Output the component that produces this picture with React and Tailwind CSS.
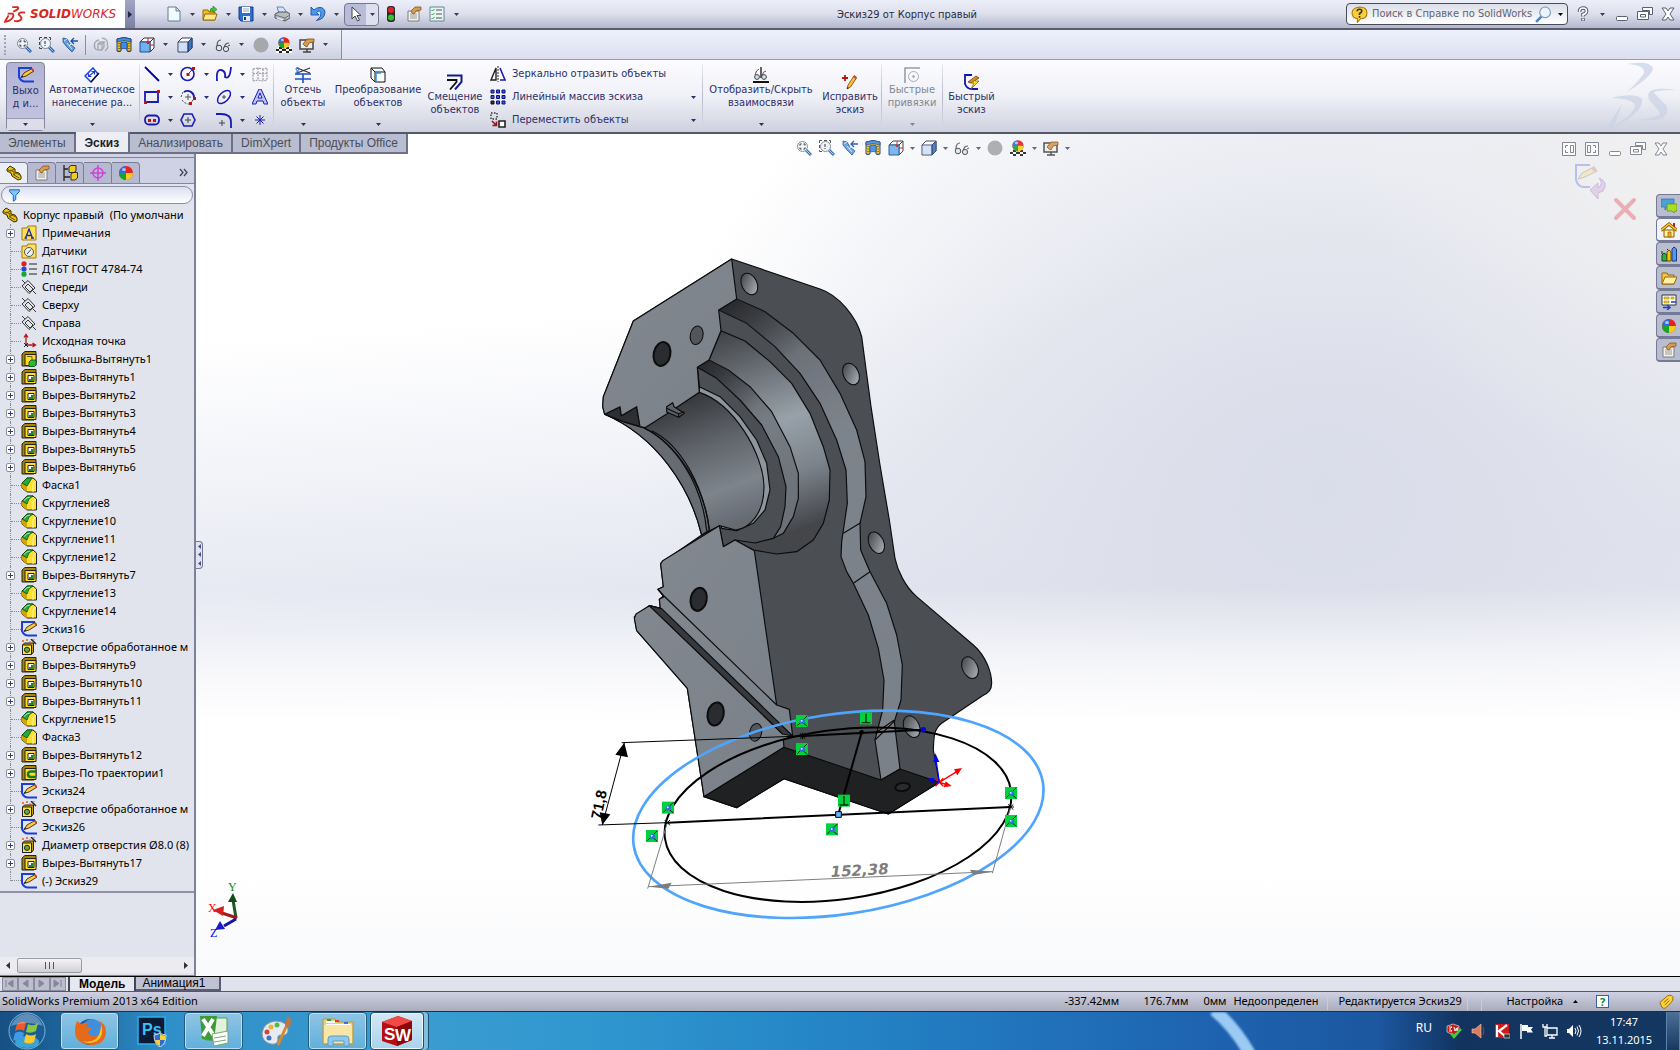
import { clsx } from "clsx";

// ── ICONS ──
// Every drawing lives on a 16x16 grid; <Icon> scales it to the size asked for.
const part = (
  <>
    <path d="M1 4l3-3 5 3v3l4 1 2 3v3l-3 1-6-4-1-3-4-2z" fill="#e8c31c" stroke="#3a2c00" />
    <path d="M4 5l4 2v3l5 3M1 4l3 2 5-2M7 10l3-2 4 2" fill="none" stroke="#6e5200" />
  </>
);
const magnifier = (
  <>
    <path d="M10 10l5 5" stroke="#2b62ad" strokeWidth="3" />
    <path d="M10 10l4.500 4.500" stroke="#9cc8f2" />
    <circle cx="6.500" cy="6.500" r="5" fill="#eef4fb" stroke="#7d8490" />
  </>
);
const boss = (
  <>
    <path d="M1 3l3-2.500h11v11L13 15H1z" fill="#a98500" stroke="#222" />
    <path d="M4 3.500h11v11H4z" fill="#fddc2a" stroke="#222" />
  </>
);
const rounded = (
  <>
    <path d="M1 6l5-5h6l3.500 3v11H6L1 11z" fill="#ffdf2e" stroke="#222" />
    <path d="M1 11l5 4V9L1 6z" fill="#d5a500" />
    <path d="M15 4l-3 3v8" fill="none" stroke="#fff6a8" />
  </>
);
const sketch = (
  <>
    <path d="M14 1H1v9q2 4.500 6 4.500h9" fill="none" stroke="#1b3ed8" strokeWidth="2" />
    <path d="M3 10.500l3-4.500 8-4.500 2 2.500-8 5z" fill="#fbc93b" stroke="#3b2a10" strokeWidth=".9" />
    <path d="M3 10.500l1.200-2 1.300 1.300z" fill="#222" />
    <path d="M13 2l1.500-.8 1.500 2.300-1.400.9z" fill="#d23c3c" />
  </>
);
const page = (
  <>
    <path d="M2 5h11v10H2z" fill="#f1f1ee" stroke="#7d7d7d" />
    <path d="M4 8h7M4 10h7M4 12h7" stroke="#9a9a9a" />
    <path d="M5 5l4-4h6v3l-5 1-2 3-2-1z" fill="#d79a4e" stroke="#7a4a15" strokeWidth=".7" />
  </>
);
const ball = (
  <>
    <circle cx="8" cy="8" r="7" fill="#e32222" />
    <path d="M8 8V1a7 7 0 0 0-7 7z" fill="#2d6fe0" />
    <path d="M8 8v7A7 7 0 0 1 1 8z" fill="#18a32c" />
    <path d="M8 8v7a7 7 0 0 0 7-7z" fill="#f2cf1d" />
    <ellipse cx="6" cy="4.500" rx="2" ry="1.500" fill="#fff" opacity=".6" />
  </>
);
const plane = (
  <path d="M1 7l6-5.500 7 7.500-6 5.500zM4 8l3-3 5 5-3 3zM1 1l3 3M12 12l3 3" fill="none" stroke="#222" strokeWidth=".9" />
);
const hole = (
  <>
    <path d="M1.500 6l2-2h9v9l-2 2.500h-9z" fill="#c99f00" stroke="#222" />
    <path d="M1.500 6h9v9.500h-9z" fill="#fde548" stroke="#222" />
    <circle cx="6" cy="10.800" r="2.600" fill="#64a844" stroke="#222" />
    <path d="M10 0l5 5" stroke="#222" strokeWidth="1.500" />
    <path d="M2 1v2M1 2h2M6 0v2M5 1h2M9 2v2M12 0h2" stroke="#e05a10" />
  </>
);
const pencil = (
  <>
    <path d="M5 15l1-4 6-9 2.500 2-6 9z" fill="#f9c22e" stroke="#6b4210" strokeWidth=".8" />
    <path d="M11 3l1.200-2 2.800 2-1.400 2z" fill="#d24545" />
    <path d="M5 15l.5-2 1.500 1z" fill="#222" />
  </>
);

const ICONS = {
  part, sketch, page, ball, plane, hole,
  newDoc: <path d="M2 1h8l4 4v10H2zM10 1v4h4" fill="#f3fafd" stroke="#5d7f92" />,
  open: (
    <>
      <path d="M1 4h5l1 2h6v8H1z" fill="#f7b92c" stroke="#9a6a00" />
      <path d="M3 8h12l-2 6H1z" fill="#ffe98c" stroke="#9a6a00" />
      <path d="M8 5q0-3 3-3V0l4 3.500-4 3V4.500q-2 0-2 1z" fill="#3fc832" stroke="#197a10" strokeWidth=".6" />
    </>
  ),
  save: (
    <>
      <path d="M1 1h14v14H3l-2-2z" fill="#2f6fd0" stroke="#173a80" />
      <path d="M4 1h8v6H4z" fill="#fff" />
      <path d="M5 3h6M5 5h6" stroke="#9ab" />
      <path d="M5 10h7v5H5z" fill="#dfe8f5" />
      <path d="M6 11h2v3H6z" fill="#173a80" />
    </>
  ),
  print: (
    <>
      <path d="M3 1h6l4 6H5z" fill="#cfe4ff" stroke="#6b84a8" />
      <path d="M1 8l4-2h8l3 2v4l-5 3L1 12z" fill="#b9bcc2" stroke="#555" />
      <path d="M1 9l10 3 5-3M11 12v3" fill="none" stroke="#70737a" />
      <path d="M3 12l6 2" stroke="#e8e9ec" strokeWidth="1.500" />
    </>
  ),
  undo: (
    <path d="M1 1v8h8L6.500 6.500Q10 3.500 11 7q.5 4-4.500 7.500Q15 13 15 6 14 1 9 1.500 6 2 4 4z" fill="#4b9be8" stroke="#1650a8" strokeWidth=".9" />
  ),
  cursor: <path d="M4 1v12l3-3 2.500 5 2-1L9 9.500h4z" fill="#fff" stroke="#444" />,
  light: (
    <>
      <rect x="4" y="0" width="8" height="16" rx="3" fill="#2b2b2b" />
      <circle cx="8" cy="4" r="3" fill="#e8202c" />
      <circle cx="8" cy="11.500" r="3" fill="#33c32e" />
    </>
  ),
  list: (
    <>
      <path d="M1 1h14v14H1z" fill="#e9f4f4" stroke="#5c8a90" />
      <path d="M2.500 4l1 1 2-2M2.500 8l1 1 2-2M2.500 12l1 1 2-2" fill="none" stroke="#2a9a3a" />
      <path d="M7 4h6M7 8h6M7 12h6" stroke="#555" />
    </>
  ),
  zoomFit: (
    <>
      {magnifier}
      <path d="M4 5.500V4h1.500M9 5.500V4H7.500M4 7.500V9h1.500M9 7.500V9H7.500" fill="none" stroke="#222" />
    </>
  ),
  zoomArea: (
    <>
      {magnifier}
      <path d="M.5 3V.5H3M5 .5h3M10 .5h1.500V3M.5 5v3M.5 10v1.500H3" fill="none" stroke="#444" />
      <path d="M6 4v3M6 8v1" stroke="#222" />
    </>
  ),
  previous: (
    <>
      <path d="M1 1l4 1 3 5 5 4-3 4-5-5-4-5z" fill="#5c9ede" stroke="#1f4c8a" strokeWidth=".8" />
      <path d="M5 6l5 6M2 4l3-2M7 9l2-2" stroke="#cfe6fb" />
      <path d="M16 4H9.500M12 1L9 4l3 3" fill="none" stroke="#1c50a8" strokeWidth="1.300" />
    </>
  ),
  rotate: (
    <path d="M2 10q-2-6 4-7M4 13q-4-2-2-7M9 1q7 1 5 8M12 14q3-2 3-5M5 7h4v6H5zM9 7l2-2H7L5 7M9 13l2-3V5" fill="none" stroke="#a6a8ae" strokeWidth="1.300" />
  ),
  section: (
    <>
      <path d="M1 2q7-3 14 0v12q-2 1.500-4 0V6Q8 5 5 6v8q-2 1.500-4 0z" fill="#f5c21a" stroke="#183c7a" />
      <path d="M1 2q7-3 14 0v3q-7-3-14 0zM5 5.500Q8 4.500 11 5.500V12Q8 11 5 12z" fill="#3e8fe8" stroke="#183c7a" strokeWidth=".7" />
      <path d="M3 6v8M13 6v8" stroke="#222" strokeDasharray="1 1.500" />
    </>
  ),
  views: (
    <>
      <path d="M5 1h10v10l-4 4V5H1l4-4zM11 5l4-4" fill="#fff" stroke="#333" />
      <path d="M1 5h10v10H1z" fill="#6fb0ef" stroke="#1d4f93" />
      <path d="M9 1v6M7.500 5L9 7l1.500-2M15 8h-4" fill="none" stroke="#c81818" />
    </>
  ),
  cube: (
    <>
      <path d="M1 5l4-4h10v10l-4 4H1z" fill="#fff" stroke="#2d3f66" />
      <path d="M11 5l4-4v10l-4 4z" fill="#3a76c8" stroke="#2d3f66" />
      <path d="M2 6h8v8H2z" fill="#cfe0f6" />
      <path d="M1 5h10v10" fill="none" stroke="#2d3f66" />
    </>
  ),
  glasses: (
    <>
      <path d="M2 9q0-6 4-6M9 11q1-5 5-5" fill="none" stroke="#555" strokeWidth="1.200" />
      <circle cx="4" cy="11" r="2.800" fill="#d8e8f2" stroke="#444" />
      <circle cx="11" cy="12" r="2.600" fill="#d8e8f2" stroke="#444" />
      <path d="M13 9l2-1" stroke="#444" />
    </>
  ),
  sphere: <circle cx="8" cy="8" r="7.500" fill="#a6a8ac" />,
  appearance: (
    <>
      <path d="M0 12l3-2h10l3 2v4H0z" fill="#fff" />
      <path d="M0 12h3v2H0zM3 14h3v2H3zM6 12h4v2H6zM10 14h3v2h-3zM13 12h3v2h-3zM3 10h3v2H3zM10 10h3v2h-3z" fill="#222" />
      <g transform="translate(1.600 -.6) scale(.8)">{ball}</g>
    </>
  ),
  scene: (
    <>
      <path d="M1 3h13v9H1z" fill="#eceff2" stroke="#444" strokeWidth="1.500" />
      <path d="M4 15h8M8 12v3" stroke="#444" strokeWidth="1.500" />
      <path d="M4 7l4-5h7v3l-5 1-2 4-2-1z" fill="#d79a4e" stroke="#6e420f" strokeWidth=".7" />
    </>
  ),
  dimension: (
    <>
      <path d="M1 9l8-8 5 6-7 8z" fill="#fff" stroke="#1c3fd6" strokeWidth="1.500" />
      <path d="M7 15l8-9" stroke="#111" strokeWidth="1.200" />
      <path d="M5 9l5-4M4.500 6.500v3h3M7.500 4.500h3v3" fill="none" stroke="#1c3fd6" strokeWidth="1.200" />
    </>
  ),
  line: <path d="M1 1l14 14" stroke="#00009c" strokeWidth="1.800" />,
  rect: (
    <>
      <path d="M1 3h13v10H1z" fill="none" stroke="#1a1ab4" strokeWidth="1.800" />
      <path d="M13 1h3v3h-3zM0 12h3v3H0z" fill="#c01010" />
    </>
  ),
  slot: (
    <>
      <rect x="1" y="3.500" width="14" height="9" rx="4" fill="none" stroke="#1a1ab4" strokeWidth="1.800" />
      <path d="M4 7h3v3H4zM9 7h3v3H9z" fill="#c01010" />
    </>
  ),
  circle: (
    <>
      <circle cx="7.500" cy="8" r="6.500" fill="none" stroke="#1a1ab4" strokeWidth="1.600" />
      <path d="M6.500 7h3v3h-3zM12 1h3v3h-3z" fill="#c01010" />
      <path d="M8 8l5-5" stroke="#c01010" />
    </>
  ),
  arc: (
    <>
      <path d="M4 3A6.500 6.500 0 0 1 14 9" fill="none" stroke="#1a1ab4" strokeWidth="1.800" />
      <path d="M1 8l2-5M2 11q3 4 7 4M13 11l-2 3" fill="none" stroke="#444" strokeDasharray="2 1.500" />
      <path d="M8 5v6M5 8h6" stroke="#555" />
      <path d="M13 8h3v3h-3zM9 13h3v3H9z" fill="#c01010" />
    </>
  ),
  polygon: (
    <>
      <path d="M4 2h8l3 6-3 6H4L1 8z" fill="none" stroke="#1a1ab4" strokeWidth="1.600" />
      <path d="M8 5v6M5 8h6" stroke="#444" />
    </>
  ),
  spline: <path d="M1 15Q0 3 5 4t4 7q5 3 6-10" fill="none" stroke="#1a1ab4" strokeWidth="1.800" />,
  ellipse: (
    <>
      <ellipse cx="8" cy="8" rx="8" ry="4.500" transform="rotate(-45 8 8)" fill="none" stroke="#1a1ab4" strokeWidth="1.500" />
      <path d="M6 8h4M8 6v4" stroke="#444" />
    </>
  ),
  fillet: (
    <>
      <path d="M0 2h5q10 0 10 8v6" fill="none" stroke="#1a1ab4" strokeWidth="1.800" />
      <path d="M6 8v6M3 11h6" stroke="#444" />
    </>
  ),
  gridSketch: <path d="M1 3l5-1 5 1 4-1v12l-4 1-5-1-5 1zM1 8l5-1 5 1 4-1M6 2v12M11 3v12" fill="none" stroke="#8c8c94" strokeDasharray="2 1" />,
  letter: <path d="M0 15L7 0h2l7 15h-4l-1-3H5l-1 3zM6 9l2-5 2 5z" fill="#b9c4f2" stroke="#1a1ab4" fillRule="evenodd" />,
  star: <path d="M8 3v10M3 8h10M4.500 4.500l7 7M11.500 4.500l-7 7" stroke="#1a1ab4" />,
  trim: (
    <>
      <path d="M0 7h16M8 7v9M0 12h16" stroke="#1c50c8" strokeWidth="1.600" />
      <path d="M2 1l13 5M2 6l13-5" stroke="#333" strokeWidth="1.200" />
      <circle cx="2.500" cy="2" r="1.500" fill="none" stroke="#2864c4" />
      <circle cx="2.500" cy="6" r="1.500" fill="none" stroke="#2864c4" />
    </>
  ),
  convert: (
    <>
      <path d="M1 1h11l3 4v10H5L1 11zM1 1l4 4h10M5 5v10" fill="#fff" stroke="#111" />
      <path d="M6 15V6h5" fill="none" stroke="#2a8af0" strokeWidth="1.500" />
    </>
  ),
  offset: (
    <>
      <path d="M0 1.500h14.500V8L8 15.500" fill="none" stroke="#111a8c" strokeWidth="2" />
      <path d="M0 6h9.500v2L3 15.500" fill="none" stroke="#111" strokeWidth="1.800" />
    </>
  ),
  mirror: (
    <>
      <path d="M6 2L1 14h5z" fill="#fff" stroke="#222" strokeWidth="1.400" />
      <path d="M10 2l5 12h-5" fill="#fff" stroke="#1a1ab4" strokeWidth="1.600" />
      <path d="M8 0v16" stroke="#222" strokeDasharray="2 1" />
    </>
  ),
  pattern: (
    <>
      <path d="M1 1h3v3H1zM6.500 1h3v3h-3zM12 1h3v3h-3zM1 6.500h3v3H1zM6.500 6.500h3v3h-3zM12 6.500h3v3h-3zM6.500 12h3v3h-3zM12 12h3v3h-3z" fill="#3f55e0" stroke="#10107a" />
      <path d="M1 12h3v3H1z" fill="#333" stroke="#111" />
    </>
  ),
  move: (
    <>
      <path d="M1 1h6v6H1z" fill="none" stroke="#333" strokeWidth="1.400" strokeDasharray="1.500 1.500" />
      <path d="M9 9h6v6H9z" fill="#fff" stroke="#222" strokeWidth="1.600" />
      <path d="M2 9l4 4M6.500 9.500v4h-4" fill="none" stroke="#a01010" strokeWidth="1.600" />
    </>
  ),
  relations: (
    <>
      <path d="M0 15h16" stroke="#111" strokeWidth="2" />
      <path d="M8 0v11" stroke="#111" strokeWidth="1.300" />
      <path d="M2 8q1-5 4-6M9 9q1-5 4-5" fill="none" stroke="#555" />
      <circle cx="4" cy="10" r="2.400" fill="#cfe2f0" stroke="#444" />
      <circle cx="11" cy="10" r="2.400" fill="#cfe2f0" stroke="#444" />
    </>
  ),
  repair: (
    <>
      {pencil}
      <path d="M3 1v6M0 4h6" stroke="#c01414" strokeWidth="1.800" />
    </>
  ),
  snaps: (
    <>
      <path d="M1 16V1h15" fill="none" stroke="#9b9ba3" strokeWidth="1.600" />
      <circle cx="9.500" cy="9.500" r="5" fill="none" stroke="#aaaab2" />
      <circle cx="9.500" cy="9.500" r="1.200" fill="#9b9ba3" />
    </>
  ),
  rapid: (
    <>
      <path d="M8 1H1v9q2 5 7 5h6" fill="none" stroke="#1515a8" strokeWidth="1.800" />
      <path d="M4 8l8-6 3 2-8 5z" fill="#e08a2c" stroke="#6b4210" strokeWidth=".8" />
      <path d="M14 4L7 9h3l-3 6 8-8h-4z" fill="#ffe21f" stroke="#8a6a00" strokeWidth=".8" />
    </>
  ),
  config: (
    <>
      <path d="M2 0v16M2 4h4M2 12h6" stroke="#222" strokeWidth="1.300" />
      <path d="M7 2l2-1.500h5V6l-2 1.500H7zM9 9l2-1.500h4.500V13L13 15H9z" fill="#f2cc1e" stroke="#222" strokeWidth=".9" />
    </>
  ),
  target: (
    <>
      <circle cx="8" cy="8" r="5" fill="none" stroke="#cc45d8" strokeWidth="1.500" />
      <path d="M8 0v16M0 8h16" stroke="#cc45d8" strokeWidth="1.500" />
    </>
  ),
  notes: (
    <>
      <path d="M1 3h5l1-2h8v14H1z" fill="#ffe05a" stroke="#a87a00" />
      <path d="M4.500 13L8 4l3.500 9M5.500 10.500h5M3.500 13h2.500M10 13h3" fill="none" stroke="#182c9c" strokeWidth="1.300" />
    </>
  ),
  sensors: (
    <>
      <path d="M1 3h5l1-2h8v14H1z" fill="#ffe05a" stroke="#a87a00" />
      <circle cx="8" cy="9" r="4.500" fill="#e8f0fa" stroke="#555" />
      <path d="M6 11l4-4.500" stroke="#444" />
    </>
  ),
  material: (
    <>
      <circle cx="3" cy="2.800" r="2.600" fill="#e02020" />
      <circle cx="3" cy="8" r="2.600" fill="#2448d8" />
      <circle cx="3" cy="13.200" r="2.600" fill="#18a830" />
      <path d="M8 3h8M8 8h8M8 13h8" stroke="#222" strokeWidth="1.200" />
    </>
  ),
  origin: (
    <>
      <path d="M5 12V2M5 12h9M3 4.500L5 1.500l2 3M11.500 10l3 2-3 2" fill="none" stroke="#b01818" strokeWidth="1.300" />
      <path d="M3 10l4 4M7 10l-4 4" stroke="#222" />
    </>
  ),
  boss: (
    <>
      {boss}
      <path d="M6 5.500h5v4l3 1" fill="none" stroke="#7a6200" />
      <path d="M8 11l2-2h5v5l-1.500 1.500H8z" fill="#2eb53e" stroke="#0b4d14" strokeWidth=".8" />
    </>
  ),
  cut: (
    <>
      {boss}
      <path d="M7 6.500h6v6H7z" fill="#fff" stroke="#222" />
      <path d="M8 10h2V8h2.500v4H8z" fill="#1c8a2c" />
    </>
  ),
  sweep: (
    <>
      {boss}
      <path d="M15 6.500H10q-3 0-3 2.700t3 2.800h5" fill="none" stroke="#157a22" strokeWidth="2.600" />
    </>
  ),
  chamfer: (
    <>
      {rounded}
      <path d="M1 6l5-5h5L6 9z" fill="#27a838" stroke="#0b4d14" strokeWidth=".8" />
    </>
  ),
  fillet3d: (
    <>
      {rounded}
      <path d="M1 6l5-5h6q-5 2-6 8z" fill="#27a838" stroke="#0b4d14" strokeWidth=".8" />
      <path d="M3 5.500Q6 2 9 2" fill="none" stroke="#a6eab0" />
    </>
  ),
  filter: <path d="M2 1h12v2L9.500 8v5l-3 2V8L2 3z" fill="#7ec4f8" stroke="#1b5fc0" strokeWidth="1.200" />,
  forum: (
    <>
      <path d="M0 1h13v8H6l-2 3V9H0z" fill="#4ba0dc" stroke="#2c6e9e" strokeWidth=".7" />
      <path d="M6 6h10v7h-2l-1 2-2-2H6z" fill="#a8dc2a" stroke="#5e8a10" strokeWidth=".7" />
    </>
  ),
  home: (
    <>
      <path d="M3 8h10v7H3z" fill="#fff2a0" stroke="#8a5a00" />
      <path d="M12 1h2v5h-2z" fill="#b82020" />
      <path d="M0 8.500L8 2l8 6.500" fill="none" stroke="#8a5a00" strokeWidth="3" />
      <path d="M0 8.500L8 2l8 6.500" fill="none" stroke="#f5c430" strokeWidth="1.500" />
      <path d="M7 10h3v5H7z" fill="#f0b020" stroke="#8a5a00" strokeWidth=".7" />
    </>
  ),
  library: (
    <>
      <path d="M1 9l2-2 3 2v6H1z" fill="#30b040" stroke="#0c4a14" />
      <path d="M1 5v3M6 3l2 2" stroke="#222" />
      <path d="M6 6l2-2 2 2v9H6z" fill="#f5c824" stroke="#6a4a00" />
      <path d="M11 3l2-2 2.500 2v12H11z" fill="#5a94e6" stroke="#173a80" />
    </>
  ),
  folder: (
    <>
      <path d="M1 3h5l1 2h6v9H1z" fill="#f9c84a" stroke="#96640a" />
      <path d="M4 7h12l-3 7H1z" fill="#fff0a0" stroke="#96640a" />
    </>
  ),
  palette: (
    <>
      <path d="M1 1h14v10H1z" fill="#fff" stroke="#333" />
      <path d="M3 3h5v2H3zM10 3h3v2h-3zM3 7h5v2H3z" fill="#f5d020" stroke="#8a7000" strokeWidth=".5" />
      <path d="M10 8h5M2 13.500h6M6 11l3 2.500L6 16" stroke="#1b3ec8" strokeWidth="1.500" fill="none" />
    </>
  ),
  helpBubble: (
    <>
      <path d="M8 1q7 0 7 5.500T9 12l-3 3.500V12Q1 11 1 6.500T8 1z" fill="#f9cf35" stroke="#a9780a" />
      <path d="M5.800 5q0-2 2.200-2t2.200 1.700Q10.200 6 8 7v1.500M8 9.500V11" fill="none" stroke="#333" strokeWidth="1.500" />
    </>
  ),
  search: (
    <>
      <path d="M6 10l-5 5" stroke="#4b84c4" strokeWidth="2.400" />
      <circle cx="9.500" cy="6" r="5" fill="#e9f4fd" stroke="#7b95b4" />
    </>
  ),
  question: (
    <>
      <path d="M4.500 6q0-4 3.500-4t3.500 3.200Q11.500 7.500 8 8.500v2M8 12v3" fill="none" stroke="#5a5f72" strokeWidth="3.600" />
      <path d="M4.500 6q0-4 3.500-4t3.500 3.200Q11.500 7.500 8 8.500v2M8 12.500v2" fill="none" stroke="#fff" strokeWidth="1.600" />
    </>
  ),
  minimize: <rect x="2.500" y="10.500" width="11" height="4" rx="1" fill="#fff" stroke="#5a5f72" />,
  restore: (
    <>
      <path d="M5.500 1.500h10v7h-3v-4h-7z" fill="#fff" stroke="#5a5f72" />
      <path d="M.5 5.500h11v8H.5zM3.500 8.500h5v2.500h-5z" fill="#fff" stroke="#5a5f72" />
    </>
  ),
  close: <path d="M2 2h4l2 3 2-3h4l-4 6 4 6h-4l-2-3-2 3H2l4-6z" fill="#fff" stroke="#5a5f72" />,
  dockLeft: <path d="M1.500 1.500h13v13h-13zM9.500 4.500h3v7h-3zM7 4.500H4.500V7M7 11.500H4.500V9" fill="#fff" stroke="#5a5f72" />,
  dockRight: <path d="M1.500 1.500h13v13h-13zM3.500 4.500h3v7h-3zM9 4.500h2.500V7M9 11.500h2.500V9" fill="#fff" stroke="#5a5f72" />,
  tag: (
    <>
      <path d="M1 9l8-7q5-2 6 2 0 3-2 5l-6 6q-2 1-4-1z" fill="#fbd23c" stroke="#9a6406" />
      <path d="M5 9l5-4M6 12l5-5" stroke="#9a6406" />
    </>
  ),
};

function Icon({ name, size = 16, className }) {
  return (
    <svg viewBox="0 0 16 16" width={size} height={size} fill="none" className={clsx("shrink-0", className)} aria-hidden="true">
      {ICONS[name]}
    </svg>
  );
}

function Caret({ className }) {
  return (
    <svg viewBox="0 0 5 3" width="5" height="3" className={clsx("shrink-0 fill-current", className)} aria-hidden="true">
      <path d="M0 0h5L2.500 3z" />
    </svg>
  );
}

// ── TITLE BAR ──
function SearchBox() {
  return (
    <div className="flex h-[22px] w-[222px] items-center rounded border border-[#4a4c58] bg-gradient-to-b from-[#dcdee9] to-white px-1">
      <Icon name="helpBubble" size={17} />
      <input
        type="text"
        aria-label="Поиск в Справке"
        placeholder="Поиск в Справке по SolidWorks"
        className="ml-1 min-w-0 flex-1 bg-transparent text-[11px] placeholder:text-[#63646e] outline-none"
      />
      <button type="button" aria-label="Найти"><Icon name="search" size={17} /></button>
      <button type="button" aria-label="Параметры поиска" className="pl-1.5 text-black"><Caret /></button>
    </div>
  );
}

const FILE_ACTIONS = [
  ["newDoc", "Создать"],
  ["open", "Открыть"],
  ["save", "Сохранить"],
  ["print", "Печать"],
  ["undo", "Отменить"],
];

function TitleBar() {
  return (
    <header className="relative flex h-[30px] shrink-0 items-center border-b-2 border-[#5a5d70] bg-gradient-to-b from-[#eceefa] via-[#dddfec] to-[#b4b8cd]">
      <div className="flex h-full w-[125px] items-center bg-white pl-1">
        <svg viewBox="0 0 24 18" width="22" height="17" aria-hidden="true">
          <g fill="none" stroke="#d9261c" strokeWidth="2">
            <path d="M9 1h6q2 2-5 5M4 8h5q3 2-1 6-3 3-7 3l4-7M23 7q-7-1-7 2 5 4 2 6-2 2-7 1" />
          </g>
        </svg>
        <span className="ml-1 font-['DejaVu_Sans'] text-[12px] italic text-[#d9261c]">
          <b>SOLID</b>WORKS
        </span>
      </div>
      <button type="button" aria-label="Меню" className="flex h-full w-[10px] items-center justify-center bg-gradient-to-b from-[#a2a6c4] to-[#7b80a4]">
        <svg viewBox="0 0 4 7" width="4" height="7"><path d="M0 0l4 3.500L0 7z" fill="#22244a" /></svg>
      </button>

      <div className="ml-[29px] flex items-center text-[#3a3c55]">
        {FILE_ACTIONS.map(([icon, label]) => (
          <div key={icon} className="flex items-center">
            <button type="button" aria-label={label} className="flex w-5 justify-center"><Icon name={icon} /></button>
            <button type="button" aria-label={`${label}: ещё`} className="flex h-5 w-4 items-center justify-center"><Caret /></button>
          </div>
        ))}
        <div className="flex h-[23px] items-center rounded border border-[#74778f] bg-[#b9bcd8]">
          <button type="button" aria-label="Выбрать" className="flex w-[21px] justify-center"><Icon name="cursor" /></button>
          <button type="button" aria-label="Выбрать: ещё" className="flex h-full w-3 items-center justify-center rounded-r bg-[#dfe0ef]"><Caret /></button>
        </div>
        <div className="ml-0.5 flex items-center gap-[3px]">
          {["light", "page", "list"].map((icon) => (
            <button key={icon} type="button" aria-label={icon} className="flex w-5 justify-center"><Icon name={icon} /></button>
          ))}
          <button type="button" aria-label="Ещё" className="px-1"><Caret /></button>
        </div>
      </div>

      <h1 className="flex-1 pl-[374px] pt-0.5 text-[11px] text-[#2a2b38]">Эскиз29 от Корпус правый</h1>

      <div className="flex items-center gap-[7px] pr-1 text-[#3a3c55]">
        <SearchBox />
        <button type="button" aria-label="Справка"><Icon name="question" /></button>
        <button type="button" aria-label="Справка: ещё" className="px-0.5"><Caret /></button>
        <button type="button" aria-label="Свернуть"><Icon name="minimize" /></button>
        <button type="button" aria-label="Восстановить"><Icon name="restore" /></button>
        <button type="button" aria-label="Закрыть"><Icon name="close" /></button>
      </div>
    </header>
  );
}

// ── VIEW TOOLBARS ──
// "more" adds the drop-down arrow after the button.
const VIEW_TOOLS = [
  { icon: "zoomFit", label: "Изменить в размер экрана" },
  { icon: "zoomArea", label: "Увеличить область" },
  { icon: "previous", label: "Предыдущий вид" },
  { icon: "rotate", label: "Вращать", barOnly: true },
  { icon: "section", label: "Разрез" },
  { icon: "views", label: "Ориентация видов", more: true },
  { icon: "cube", label: "Стиль отображения", more: true },
  { icon: "glasses", label: "Скрыть объекты", more: true },
  { icon: "sphere", label: "Редактировать внешний вид" },
  { icon: "appearance", label: "Применить сцену", headsMore: true },
  { icon: "scene", label: "Настройки вида", more: true },
];

function ViewToolbar() {
  return (
    <div className="flex h-[30px] shrink-0 border-b border-[#9a9cab] bg-gradient-to-b from-[#eef0fc] to-[#dcdfef] text-[#3a3c55]">
      <div className="flex items-center border-r border-[#8b8d9c] bg-gradient-to-b from-[#f2f3fc] to-[#cdd0e0] pr-2">
        <span className="mx-1 h-5 w-1 border-l-2 border-dotted border-[#a0a3b8]" />
        {VIEW_TOOLS.map((tool) => (
          <div key={tool.icon} className="flex items-center">
            {tool.barOnly && <span className="ml-1 mr-[3px] h-5 w-px bg-[#8b8d9c]" />}
            <button type="button" aria-label={tool.label} className="flex w-[23px] justify-center"><Icon name={tool.icon} /></button>
            {tool.more && <button type="button" aria-label={`${tool.label}: ещё`} className="flex h-5 w-[15px] items-center justify-center"><Caret /></button>}
          </div>
        ))}
      </div>
    </div>
  );
}

function HeadsUpToolbar() {
  return (
    <div className="relative flex h-7 items-center justify-center pr-3 text-[#555870] opacity-90">
      {VIEW_TOOLS.filter((tool) => !tool.barOnly).map((tool) => (
        <div key={tool.icon} className="flex items-center">
          <button type="button" aria-label={tool.label} className="flex w-[23px] justify-center"><Icon name={tool.icon} /></button>
          {(tool.more || tool.headsMore) && (
            <button type="button" aria-label={`${tool.label}: ещё`} className="flex h-5 w-[10px] items-center justify-center"><Caret /></button>
          )}
        </div>
      ))}
      <div className="absolute right-[11px] top-[7px] flex gap-[7px] opacity-80">
        {["dockLeft", "dockRight", "minimize", "restore", "close"].map((icon) => (
          <button key={icon} type="button" aria-label={icon}><Icon name={icon} /></button>
        ))}
      </div>
    </div>
  );
}

// ── RIBBON ──
function Divider() {
  return <span className="my-1 w-px shrink-0 bg-gradient-to-b from-[#e6e7ef] via-[#b9bbca] to-[#d5d7e2]" />;
}

function BigButton({ icon, lines, more, disabled, className }) {
  return (
    <button
      type="button"
      disabled={disabled}
      className={clsx(
        "flex shrink-0 flex-col items-center text-[11px] leading-[13px]",
        more ? "pt-[7px]" : "pt-3.5",
        disabled ? "text-[#85868f]" : "text-[#2e2f68]",
        className
      )}
    >
      <Icon name={icon} />
      {lines.map((line) => <span key={line} className="whitespace-nowrap">{line}</span>)}
      {more && <Caret className="mt-3.5" />}
    </button>
  );
}

const SKETCH_TOOLS = [
  ["line", 1], ["circle", 1], ["spline", 1], ["gridSketch", 0],
  ["rect", 1], ["arc", 1], ["ellipse", 1], ["letter", 0],
  ["slot", 1], ["polygon", 0], ["fillet", 1], ["star", 0],
];

const LIST_TOOLS = [
  { icon: "mirror", label: "Зеркально отразить объекты" },
  { icon: "pattern", label: "Линейный массив эскиза", more: true },
  { icon: "move", label: "Переместить объекты", more: true },
];

function Ribbon() {
  return (
    <section className="relative flex h-[74px] shrink-0 items-stretch border-b-2 border-[#555869] bg-gradient-to-b from-[#fcfcff] via-[#f0f1f7] to-[#ced1df] text-[#2e2f68]">
      <button
        type="button"
        className="ml-1.5 mt-0.5 flex h-[69px] w-[39px] flex-col items-center rounded border border-[#83859c] bg-gradient-to-b from-[#b3b4d4] to-[#c4c5e2] pt-1 text-[11px] leading-[13px]"
      >
        <Icon name="sketch" className="mb-px" />
        <span>Выхо</span>
        <span>д и...</span>
        <span className="mt-2 flex w-full flex-1 items-center justify-center border-t border-[#9a9cb4] bg-[#dcdde8]"><Caret /></span>
      </button>
      <BigButton icon="dimension" lines={["Автоматическое", "нанесение ра..."]} more className="w-[94px]" />
      <Divider />
      <div className="grid grid-cols-[36px_36px_36px_22px] content-center gap-y-[5px] pl-[3px] pt-0.5">
        {SKETCH_TOOLS.map(([icon, more]) => (
          <div key={icon} className="flex h-[18px] items-center">
            <button type="button" aria-label={icon} className="flex w-[18px] justify-center"><Icon name={icon} /></button>
            {more === 1 && <button type="button" aria-label={`${icon}: ещё`} className="flex h-4 w-[18px] items-center justify-center"><Caret /></button>}
          </div>
        ))}
      </div>
      <Divider />
      <BigButton icon="trim" lines={["Отсечь", "объекты"]} more className="w-[58px]" />
      <BigButton icon="convert" lines={["Преобразование", "объектов"]} more className="w-[92px]" />
      <BigButton icon="offset" lines={["Смещение", "объектов"]} className="w-[62px]" />
      <div className="flex w-[216px] flex-col justify-center gap-[7px] pt-0.5">
        {LIST_TOOLS.map((tool) => (
          <button key={tool.icon} type="button" className="flex h-4 items-center gap-1.5 pl-1 pr-1.5 text-left text-[11px]">
            <Icon name={tool.icon} />
            <span className="flex-1 whitespace-nowrap">{tool.label}</span>
            {tool.more && <Caret />}
          </button>
        ))}
      </div>
      <Divider />
      <BigButton icon="relations" lines={["Отобразить/Скрыть", "взаимосвязи"]} more className="w-[116px]" />
      <BigButton icon="repair" lines={["Исправить", "эскиз"]} className="w-[62px]" />
      <Divider />
      <BigButton icon="snaps" lines={["Быстрые", "привязки"]} more disabled className="w-[60px]" />
      <Divider />
      <BigButton icon="rapid" lines={["Быстрый", "эскиз"]} className="w-[57px]" />
      <svg viewBox="0 0 76 72" width="76" height="72" className="absolute right-1 top-0" aria-hidden="true">
        <g fill="#c9d3e6" opacity=".75">
          <path d="M27 4q22-4 26 4 0 8-26 24 16-15 17-20 0-7-17-8zM11 38q24-6 31 1 2 15-38 33l18-28-8 22q20-12 21-20 0-7-24-8zM76 30q-24 0-22 3 2 2 12 12 8 18-30 15 22-2 24-6 0-2-11-14-6-15 27-10z" />
        </g>
      </svg>
    </section>
  );
}

// ── LEFT PANEL ──
const COMMAND_TABS = ["Элементы", "Эскиз", "Анализировать", "DimXpert", "Продукты Office"];

function CommandTabs() {
  return (
    <nav className="relative z-10 flex h-5 w-max font-['Liberation_Sans'] text-[12px] text-[#4b4d58]">
      {COMMAND_TABS.map((tab) => (
        <button
          key={tab}
          type="button"
          className={clsx(
            "whitespace-nowrap border-b-2 border-r-2 border-[#6d7088] leading-[17px]",
            tab === "Эскиз" ? "-mt-0.5 bg-[#eceef4] px-[9px] pt-0.5 font-bold text-[#1f2026]" : "bg-[#b9bdd0] px-2"
          )}
        >
          {tab}
        </button>
      ))}
    </nav>
  );
}

const PANEL_TABS = ["part", "page", "config", "target", "ball"];

// [icon, label, has children]
const TREE = [
  ["notes", "Примечания", 1],
  ["sensors", "Датчики", 0],
  ["material", "Д16Т ГОСТ 4784-74", 0],
  ["plane", "Спереди", 0],
  ["plane", "Сверху", 0],
  ["plane", "Справа", 0],
  ["origin", "Исходная точка", 0],
  ["boss", "Бобышка-Вытянуть1", 1],
  ["cut", "Вырез-Вытянуть1", 1],
  ["cut", "Вырез-Вытянуть2", 1],
  ["cut", "Вырез-Вытянуть3", 1],
  ["cut", "Вырез-Вытянуть4", 1],
  ["cut", "Вырез-Вытянуть5", 1],
  ["cut", "Вырез-Вытянуть6", 1],
  ["chamfer", "Фаска1", 0],
  ["fillet3d", "Скругление8", 0],
  ["fillet3d", "Скругление10", 0],
  ["fillet3d", "Скругление11", 0],
  ["fillet3d", "Скругление12", 0],
  ["cut", "Вырез-Вытянуть7", 1],
  ["fillet3d", "Скругление13", 0],
  ["fillet3d", "Скругление14", 0],
  ["sketch", "Эскиз16", 0],
  ["hole", "Отверстие обработанное м", 1],
  ["cut", "Вырез-Вытянуть9", 1],
  ["cut", "Вырез-Вытянуть10", 1],
  ["cut", "Вырез-Вытянуть11", 1],
  ["fillet3d", "Скругление15", 0],
  ["chamfer", "Фаска3", 0],
  ["cut", "Вырез-Вытянуть12", 1],
  ["sweep", "Вырез-По траектории1", 1],
  ["sketch", "Эскиз24", 0],
  ["hole", "Отверстие обработанное м", 1],
  ["sketch", "Эскиз26", 0],
  ["hole", "Диаметр отверстия Ø8.0 (8)", 1],
  ["cut", "Вырез-Вытянуть17", 1],
  ["sketch", "(-) Эскиз29", 0],
];

function TreeRow({ icon, label, expandable, last }) {
  return (
    <li className="flex h-[18px] items-center">
      <span className={clsx("ml-[10px] w-[11px] shrink-0 border-l border-dotted border-[#8a8c96]", last ? "h-[9px] self-start" : "h-full")}>
        {expandable ? (
          <button type="button" aria-label={`Развернуть ${label}`} className="-ml-[5px] mt-[5px] block h-[9px] w-[9px] rounded-xs border border-[#8d8f98] bg-white">
            <svg viewBox="0 0 7 7" width="7" height="7"><path d="M3.500 1v5M1 3.500h5" stroke="#2b3f94" /></svg>
          </button>
        ) : (
          <span className={clsx("block w-full border-t border-dotted border-[#8a8c96]", last ? "mt-2" : "mt-[9px]")} />
        )}
      </span>
      <Icon name={icon} />
      <span className="ml-[5px] whitespace-nowrap">{label}</span>
    </li>
  );
}

function FeaturePanel() {
  return (
    <aside className="flex min-h-0 flex-1 flex-col border-r-2 border-[#7d8199] bg-[#e1e4ec] text-black">
      <div className="h-1 shrink-0 border-b border-[#80839a] bg-[#d0d2e3]" />
      <div className="flex shrink-0 items-end border-b border-[#8386a0] bg-[#cfd2e5] pt-1">
        {PANEL_TABS.map((icon, i) => (
          <button
            key={icon}
            type="button"
            aria-label={icon}
            className={clsx(
              "flex h-[21px] w-7 items-center justify-center rounded-tr border-r border-t border-[#7a7e98]",
              i === 0 ? "bg-[#eceef5]" : "bg-[#b6bad0]"
            )}
          >
            <Icon name={icon} />
          </button>
        ))}
        <button type="button" aria-label="Развернуть панель" className="ml-auto mr-1.5 mb-1.5 text-[#44464f]">
          <svg viewBox="0 0 9 9" width="9" height="9"><path d="M1 1l3 3.500L1 8M5 1l3 3.500L5 8" fill="none" stroke="currentColor" strokeWidth="1.300" /></svg>
        </button>
      </div>
      <label className="mx-px mt-0.5 flex h-[18px] shrink-0 items-center rounded-full border border-[#8a8da6] bg-gradient-to-b from-[#dcdff0] to-white pl-1.5">
        <Icon name="filter" size={13} />
        <input type="text" aria-label="Фильтр дерева" className="min-w-0 flex-1 bg-transparent px-1 outline-none" />
      </label>

      <div className="mt-0.5 shrink-0 overflow-hidden border-b-2 border-[#8f92aa] pb-px font-['Noto_Sans',sans-serif] text-[11px]">
        <div className="flex h-[18px] items-center whitespace-pre pl-0.5">
          <Icon name="part" />
          <span className="ml-[5px]">Корпус правый  (По умолчани</span>
        </div>
        <ul>
          {TREE.map(([icon, label, expandable], i) => (
            <TreeRow key={i} icon={icon} label={label} expandable={expandable === 1} last={i === TREE.length - 1} />
          ))}
        </ul>
      </div>

      <div className="mt-auto mb-0.5 flex h-4 shrink-0 items-center bg-[#ececf0] px-1.5 text-[#333]">
        <svg viewBox="0 0 4 7" width="4" height="7"><path d="M4 0v7L0 3.500z" fill="currentColor" /></svg>
        <span className="ml-[7px] flex h-[15px] w-[65px] items-center justify-center gap-px rounded-xs border border-[#9b9ba2] bg-gradient-to-b from-[#f5f5f7] to-[#cfcfd5]">
          {[0, 1, 2].map((i) => <i key={i} className="mx-px h-[7px] w-px bg-[#55565e]" />)}
        </span>
        <svg viewBox="0 0 4 7" width="4" height="7" className="ml-auto"><path d="M0 0v7l4-3.500z" fill="currentColor" /></svg>
      </div>
      <div className="h-px shrink-0 bg-[#8386a0]" />
    </aside>
  );
}

// ── 3D MODEL ──
// The part is drawn at three units per pixel, so a stroke of 3 is one pixel.
const OUTLINE =
  "M425 57L690 147C745 165 800 230 815 290L843 500 870 675 898 840 915 955C922 990 945 1040 980 1070L1150 1215C1190 1250 1205 1300 1205 1330C1205 1350 1195 1358 1180 1366L1055 1450C1030 1470 1032 1490 1030 1530L1048 1627 895 1722 582 1616 440 1703 342 1670 292 1345 140 1172 133 1130 178 1097 211 1105 208 1078 220 1068 204 1048 220 1040 212 970 335 885C300 740 200 590 44 523L38 500 40 470 130 243z";
const RING_A = "440 177 525 215 610 280 690 360 750 460 800 570 825 665 828 770 810 850";
const RING_C = "393 272 465 303 540 365 605 430 660 520 700 620 720 690 718 780 700 850 670 900 620 935 560 942 490 930 435 900";

const HOLES = [
  [478, 132, 23, 34, -25, "lit"],
  [783, 402, 23, 34, -25, "lit"],
  [859, 908, 22, 34, -25, "lit"],
  [1140, 1283, 23, 34, -25, "lit"],
  [965, 1460, 23, 34, -25, "lit"],
  [216, 342, 25, 36, 12, "deep"],
  [326, 1078, 24, 35, 12, "deep"],
  [377, 1422, 24, 35, 12, "deep"],
  [320, 286, 19, 28, 12, "mid"],
  [497, 1477, 18, 27, 12, "mid"],
  [938, 1641, 22, 12, -8, "deep"],
];

function Model() {
  return (
    <g transform="translate(590 240) scale(.33333)" stroke="#0c0c0d" strokeWidth="3.500" strokeLinejoin="round">
      <path d={OUTLINE} fill="#4b4e52" />
      {/* channel that runs down the flange */}
      <path
        d={`M${RING_A}L812 930 840 995 890 1090 920 1185 937 1275 933 1380 913 1445 930 1587 873 1620 855 1500 878 1410 882 1320 865 1225 835 1125 790 1030 770 995 753 950 755 905 772 790 768 690 740 600 690 490 630 400 555 320 470 250 386 210z`}
        fill="url(#channel)"
      />
      <path d="M386 210L440 177 525 215 610 280 650 320 590 355 555 320 470 250z" fill="url(#shade)" stroke="none" />
      <path d="M760 880L812 848M790 1030L840 995M855 1500L915 1442M855 1480L913 1440" />
      {/* conical step and the rings inside it */}
      <path d={`M${RING_C}L388 857 357 360z`} fill="url(#cone)" />
      <path d="M357 360L415 390 480 440 545 515 600 620 625 700 625 775 610 830 580 880 550 895 435 900 322 382z" fill="url(#step)" />
      <path d="M322 382L357 360 415 390 480 440 515 480 480 515 450 480 380 415z" fill="url(#shade)" stroke="none" />
      <path d="M322 382L380 415 450 480 515 555 565 650 588 740 585 800 572 860 550 895 495 909 435 900 400 920 388 857 328 440z" fill="#4b4e52" />
      <path d="M328 440L390 470 450 530 500 600 530 670 540 750 525 810 490 850 440 872 395 865 328 457z" fill="#8d959d" />
      <path d="M160 563L328 457C430 490 520 640 522 740C522 820 480 865 437 870L388 857 335 885C330 760 260 620 160 563z" fill="url(#bore)" />
      <path d="M44 523C200 590 300 740 335 885L358 870C345 740 260 610 160 563L100 545z" fill="#666b72" />
      <path d="M165 565C250 610 335 720 350 872M185 572C275 615 340 740 358 868" fill="none" />
      {/* upper cut face */}
      <path d="M44 523L90 500 94 527 140 500 150 560 100 545z" fill="#2e2f32" />
      <path d="M425 57L130 243 40 470 38 500 44 523 90 500 94 527 140 500 150 560 165 563 230 522 328 457 322 382 357 360 393 272 386 210 440 177z" fill="url(#face)" />
      <path d="M230 500L248 488 252 500 283 520 266 532 230 516z" fill="#5c6167" />
      <path d="M230 505L266 522V532M266 522L283 515" fill="none" />
      {/* lower cut face */}
      <path d="M388 857L218 962 212 972 220 1040 204 1048 222 1070 208 1078 211 1105 178 1097 138 1122 133 1135 140 1172 292 1345 342 1670 582 1522 580 1500 608 1488 598 1408 560 1395 493 932 435 900 400 920z" fill="url(#face)" />
      <path d="M222 1068L560 1395M178 1097L578 1482M204 1048L222 1068" fill="none" />
      <path d="M178 1097L215 1106 608 1488 578 1482z" fill="#38393c" />
      {/* underside */}
      <path d="M342 1670L582 1522 873 1620 930 1587 1048 1627 895 1722 582 1616 440 1703z" fill="#202123" />
      {HOLES.map(([cx, cy, rx, ry, angle, kind]) => (
        <ellipse
          key={`${cx}-${cy}`}
          cx={cx} cy={cy} rx={rx} ry={ry}
          transform={`rotate(${angle} ${cx} ${cy})`}
          fill={kind === "lit" ? "url(#holeLit)" : kind === "mid" ? "#53565a" : "#2b2c2f"}
          strokeWidth={kind === "deep" ? 6 : 3}
        />
      ))}
    </g>
  );
}

const COINCIDENT = [[666, 603], [666, 687], [264, 863], [216, 948], [756, 928], [1293, 819], [1293, 903]];
const PERPENDICULAR = [[858, 595], [792, 842]];

function Sketch() {
  return (
    <g transform="translate(580 520) scale(.33333)" fill="none">
      <ellipse cx="775" cy="883" rx="621" ry="300" transform="rotate(-8.700 775 883)" stroke="#4fa4fb" strokeWidth="8" />
      <ellipse cx="774" cy="884" rx="524" ry="254" transform="rotate(-7.900 774 884)" stroke="#000" strokeWidth="6" />
      <path d="M262 908L1292 861M775 883L845 637M668 648L1030 629" stroke="#000" strokeWidth="6" />
      <path d="M125 668L668 648M55 915L262 908M133 668L67 915" stroke="#000" strokeWidth="3" />
      <path d="M133 668l-27 36 38 8zM67 915l-8-38 32 6z" fill="#000" />
      <path d="M205 1100L1238 1055M262 908L203 1106M1292 861L1237 1060" stroke="#7d7d7d" strokeWidth="3" />
      <path d="M205 1100l70-12-10 18zM1238 1055l-68-6 10 16z" fill="#7d7d7d" />
      <path d="M658 648h20M668 638v20M660 640l16 16M676 640l-16 16M252 908h20M254 900l16 16M270 900l-16 16M1282 861h20M1284 853l16 16M1300 853l-16 16" stroke="#000" strokeWidth="3" />
      <circle cx="845" cy="637" r="7" fill="#000" />
      <circle cx="1030" cy="629" r="8" fill="#0000e0" />
      {/* sketch origin */}
      <path d="M1078 787L1135 752M1078 787L1105 795M1066 775l24 24M1090 775l-24 24" stroke="#f00" strokeWidth="4" />
      <path d="M1146 744l-24 4 10 18zM1115 798l-24 4 6-18z" fill="#f00" />
      <path d="M1078 787L1068 720M1078 787L1056 782" stroke="#00f" strokeWidth="4" />
      <path d="M1066 700l12 26h-18zM1040 776l24-2-4 16z" fill="#00f" />
      <path d="M767 875h17v17h-17z" fill="#6ab4ff" stroke="#000" strokeWidth="3" />
      {COINCIDENT.map(([x, y]) => (
        <g key={`${x}-${y}`} transform={`translate(${x} ${y})`}>
          <path d="M-18-18h36v36h-36z" fill="#00d23c" />
          <path d="M-14 14L16-16M2 4l14 12" stroke="#062a0c" strokeWidth="3" />
          <circle r="8" cx="1" cy="1" fill="#2f6fe0" />
          <circle r="3" cx="-1" cy="-1" fill="#d6e6ff" />
        </g>
      ))}
      {PERPENDICULAR.map(([x, y]) => (
        <g key={`${x}-${y}`} transform={`translate(${x} ${y})`}>
          <path d="M-18-18h36v36h-36z" fill="#00d23c" />
          <path d="M-13 13h26M0-14v26" stroke="#062a0c" strokeWidth="4" />
        </g>
      ))}
    </g>
  );
}

function Triad() {
  return (
    <g>
      <path d="M236 918L233 900" stroke="#1d5a22" strokeWidth="3" />
      <path d="M233 893l-5 9h9z" fill="#144a19" />
      <path d="M237 918L222 913" stroke="#a81818" strokeWidth="3" />
      <path d="M213 910l11-4-1 10z" fill="#d42020" />
      <path d="M236 919L224 926" stroke="#14149c" strokeWidth="3" />
      <path d="M215 930l5-9 5 8z" fill="#1a1ac8" />
      <g fontFamily="Liberation Serif, serif" fontSize="12">
        <text x="228" y="891" fill="#0a8a0a">Y</text>
        <text x="208" y="912" fill="#f00">X</text>
        <text x="210" y="937" fill="#00f">Z</text>
      </g>
    </g>
  );
}

const TASK_TABS = ["forum", "home", "library", "folder", "palette", "ball", "page"];

function Viewport() {
  return (
    <main className="relative min-w-0 flex-1 overflow-hidden bg-white">
      <div className="absolute inset-0 bg-[linear-gradient(176deg,transparent_22%,#e2e5f0_54%,#e4e7f0_60%,transparent_74%)]" />
      <div className="absolute inset-0 bg-[radial-gradient(ellipse_46%_66%_at_76%_42%,#d9dce9_0%,#dee1ebd0_45%,transparent_100%)]" />
      <div className="absolute inset-0 bg-[radial-gradient(ellipse_22%_40%_at_100%_0%,#f0f0f0_0%,#ececefa0_50%,transparent_100%)]" />
      <div className="absolute inset-0 bg-[linear-gradient(to_bottom,transparent_54%,#fafafcd0_63%,#fff_70%,#fff_88%,#f8f9fb_100%)]" />

      <svg viewBox="196 134 1484 842" className="absolute inset-0 h-full w-full" role="img" aria-label="Корпус правый">
        <defs>
          <linearGradient id="face" x1="0" y1="0" x2="1" y2="1">
            <stop offset="0" stopColor="#838990" />
            <stop offset="1" stopColor="#7a8088" />
          </linearGradient>
          <linearGradient id="shade" x1="0" y1="0" x2="1" y2=".8">
            <stop offset="0" stopColor="#1f2022" stopOpacity=".9" />
            <stop offset="1" stopColor="#1f2022" stopOpacity="0" />
          </linearGradient>
          <linearGradient id="channel" x1="0" y1="0" x2=".25" y2="1">
            <stop offset="0" stopColor="#505358" />
            <stop offset=".2" stopColor="#6c7178" />
            <stop offset=".4" stopColor="#7c838b" />
            <stop offset="1" stopColor="#7b8189" />
          </linearGradient>
          <linearGradient id="cone" x1="0" y1="0" x2=".2" y2="1">
            <stop offset="0" stopColor="#3c3e41" />
            <stop offset=".25" stopColor="#6b7076" />
            <stop offset=".5" stopColor="#98a1a9" />
            <stop offset=".75" stopColor="#7b828a" />
            <stop offset="1" stopColor="#44464a" />
          </linearGradient>
          <linearGradient id="step" x1="0" y1="0" x2=".3" y2="1">
            <stop offset="0" stopColor="#505358" />
            <stop offset=".5" stopColor="#777d84" />
            <stop offset="1" stopColor="#6c7178" />
          </linearGradient>
          <linearGradient id="bore" x1=".2" y1="0" x2=".5" y2="1">
            <stop offset="0" stopColor="#2d2e30" />
            <stop offset=".4" stopColor="#5d6167" />
            <stop offset=".75" stopColor="#7d848c" />
            <stop offset="1" stopColor="#666b72" />
          </linearGradient>
          <linearGradient id="holeLit" x1="0" y1="0" x2=".6" y2="1">
            <stop offset="0" stopColor="#3a3b3e" />
            <stop offset="1" stopColor="#a3a9b0" />
          </linearGradient>
        </defs>
        <Model />
        <Sketch />
        <text transform="translate(601 820) rotate(-78)" fontFamily="Liberation Sans, sans-serif" fontSize="15" fontWeight="700">71,8</text>
        <text transform="translate(831 877) rotate(-3)" fontFamily="DejaVu Sans, sans-serif" fontSize="15" fontWeight="700" fontStyle="italic" fill="#7d7d7d">152,38</text>
        <Triad />
      </svg>

      <HeadsUpToolbar />

      {/* confirmation corner */}
      <div className="absolute right-[43px] top-7 h-[59px] w-16 opacity-40">
        <button type="button" aria-label="Выйти из эскиза" className="absolute left-0 top-0">
          <svg viewBox="0 0 34 38" width="34" height="38" fill="none">
            <path d="M17 3H3v15q2 7 8 7h6" stroke="#6a78e8" strokeWidth="2" />
            <path d="M5 17l4-6 12-6 3 4-12 6z" fill="#f3e08a" stroke="#888" />
            <path d="M18 6l3-2 3 4-3 2z" fill="#d88" />
            <path d="M26 16q10 4 4 13l-5 2v6l-8-9 8-7v5q6-4 1-10z" fill="#cba6dc" stroke="#9a6ab8" />
          </svg>
        </button>
        <button type="button" aria-label="Отменить эскиз" className="absolute bottom-0 right-0">
          <svg viewBox="0 0 24 24" width="24" height="24"><path d="M3 3l18 18M21 3L3 21" stroke="#e0505a" strokeWidth="4" strokeLinecap="round" /></svg>
        </button>
      </div>

      {/* task pane tabs */}
      <div className="absolute right-0 top-[60px] flex flex-col">
        {TASK_TABS.map((icon) => (
          <button
            key={icon}
            type="button"
            aria-label={icon}
            className={clsx(
              "flex h-6 w-6 items-center justify-center rounded-l border-b-2 border-l border-t border-[#747a98]",
              icon === "home" ? "bg-[#f2f3f7]" : "bg-[#b9bdd0]"
            )}
          >
            <Icon name={icon} />
          </button>
        ))}
      </div>

      {/* panel splitter handle */}
      <button
        type="button"
        aria-label="Скрыть панель"
        className="absolute left-0 top-[407px] flex h-7 w-[7px] flex-col items-center justify-around rounded-r border border-l-0 border-[#747894] bg-[#e1e4ec]"
      >
        {[0, 1, 2].map((i) => (
          <svg key={i} viewBox="0 0 3 5" width="3" height="5"><path d="M3 0v5L0 2.500z" fill="#4a4e94" /></svg>
        ))}
      </button>
    </main>
  );
}

// ── BOTTOM BARS ──
function ModelTabs() {
  return (
    <div className="flex h-4 shrink-0 border-b border-t border-b-[#555869] border-t-black bg-[#e0e3eb] font-['Liberation_Sans'] text-[12px] leading-[13px]">
      <div className="flex items-center px-0.5">
        {["M3 1v7M10 1v7L5 4.500z", "M9 1v7L4 4.500z", "M4 1v7l5-3.500z", "M10 1v7M3 1v7l5-3.500z"].map((d) => (
          <button key={d} type="button" aria-label="Перейти" className="h-full w-4 border border-[#8a8ca0] bg-[#bcbecd]">
            <svg viewBox="0 0 14 10" width="14" height="10"><path d={d} fill="#85879a" stroke="#85879a" /></svg>
          </button>
        ))}
      </div>
      <button type="button" className="border-x-2 border-[#44465a] bg-[#e6e8f0] px-[9px] font-bold">Модель</button>
      <button type="button" className="border-b-2 border-r-2 border-[#5a5d72] bg-[#bfc2d3] px-1.5 pr-3.5">Анимация1</button>
    </div>
  );
}

function StatusBar() {
  return (
    <footer className="flex h-[19px] shrink-0 items-center whitespace-nowrap bg-gradient-to-b from-[#cfd1e4] to-[#a9acba] font-['Noto_Sans',sans-serif] text-[11px] text-black">
      <span className="flex-1 pl-0.5">SolidWorks Premium 2013 x64 Edition</span>
      <span className="w-[79px] shrink-0">-337.42мм</span>
      <span className="w-[60px] shrink-0">176.7мм</span>
      <span className="w-[30px] shrink-0">0мм</span>
      <span className="w-[94px] shrink-0">Недоопределен</span>
      <span className="w-[141px] shrink-0 border-x border-[#c9cbd8] pl-2.5">Редактируется Эскиз29</span>
      <span className="h-full w-3.5 border-r border-[#c9cbd8]" />
      <button type="button" className="flex items-center gap-2.5 pl-6">
        Настройка
        <Caret className="rotate-180" />
      </button>
      <button type="button" aria-label="Справка" className="ml-[18px] h-[13px] w-[13px] border border-[#3a62a0] bg-white text-center text-[11px] font-bold leading-[11px] text-[#0a8a1a]">?</button>
      <button type="button" aria-label="Теги" className="ml-[50px] mr-1.5"><Icon name="tag" size={15} /></button>
    </footer>
  );
}

const APP_LOGOS = {
  firefox: (
    <>
      <circle cx="16" cy="17" r="13" fill="#1d4fa0" />
      <circle cx="18" cy="14" r="10" fill="#3f8fdc" />
      <path d="M3 6l4 3q4-2 8-1-4 3-2 4l5 1-4 4q2 5 8 4 6-2 6-8-1-5-5-8 9 3 9 12-1 13-15 13Q1 29 1 16q0-6 2-10z" fill="#e66a1a" />
      <path d="M27 9q4 11-4 17-8 4-15 0 8 2 14-2 5-5 5-15z" fill="#f8c22c" />
    </>
  ),
  photoshop: (
    <>
      <path d="M2 2h27v27H2z" fill="#0c1b33" stroke="#2ab0f0" strokeWidth="1.500" />
      <text x="6" y="20" fontFamily="Liberation Sans, sans-serif" fontSize="16" fontWeight="700" fill="#3cc0fa">Ps</text>
      <path d="M24 18q-3 2-6 2 0 9 6 12 6-3 6-12-3 0-6-2z" fill="#2c6cd0" stroke="#cfd8e6" />
      <path d="M24 19v6h5q0-3 .3-4.500-3 0-5.300-1.500zM24 25h-5q1 4 5 6z" fill="#f7d033" />
    </>
  ),
  excel: (
    <>
      <path d="M8 3h21v22H8z" fill="#e3f2dc" stroke="#5a9c4a" />
      <path d="M2 1h17l-3 25L4 24z" fill="#3f9a3a" />
      <path d="M5 4l11 17M15 4L5 21" stroke="#fff" strokeWidth="4" />
      <path d="M14 19l16-3v12l-14 3z" fill="#fff" stroke="#7aa86e" />
      <path d="M16 23l12-2M16 27l12-2" stroke="#7aa86e" />
    </>
  ),
  paint: (
    <>
      <path d="M16 6q13 1 12 10-1 5-7 4-4 0-3 4 0 6-7 5-9-2-9-11Q4 7 16 6z" fill="#e6ebf0" stroke="#8a97a6" />
      <circle cx="11" cy="12" r="2.500" fill="#e8b82c" />
      <circle cx="17" cy="10" r="2.500" fill="#54b84c" />
      <circle cx="7" cy="17" r="2.500" fill="#d8423c" />
      <circle cx="9" cy="23" r="2.500" fill="#3a74d0" />
      <path d="M18 30l8-18" stroke="#d98a2c" strokeWidth="3" />
      <path d="M25 12q0-8 4-11 4 5 0 12z" fill="#b87a44" />
    </>
  ),
  explorer: (
    <>
      <path d="M1 4h12l2 3h16v22H1z" fill="#e9cf76" stroke="#b8973a" />
      <path d="M4 7h9M4 10h25" stroke="#fff" strokeWidth="2" />
      <path d="M2 10h28v18H2z" fill="#f7e6a6" />
      <path d="M5 5h4" stroke="#3a9a3a" strokeWidth="2" />
      <path d="M13 6h4" stroke="#d04030" strokeWidth="2" />
      <path d="M22 8h4" stroke="#3a74d0" strokeWidth="2" />
      <path d="M6 31v-7q0-3 3-3h15q3 0 3 3v7h-5v-5h-11v5z" fill="#8fc8ee" stroke="#5b9cc8" />
    </>
  ),
  solidworks: (
    <>
      <path d="M1 7l16-6 14 5v19l-15 6L1 26z" fill="#b50d12" />
      <path d="M1 7l16-6 14 5-15 6z" fill="#f04a48" />
      <path d="M16 12l15-6v19l-15 6z" fill="#8c070b" />
      <g fontFamily="Liberation Sans, sans-serif" fontSize="17" fontWeight="700" fill="#fff">
        <text x="3" y="25">S</text>
        <text x="14" y="26">W</text>
      </g>
    </>
  ),
};

const TASKS = [
  { id: "firefox", running: true },
  { id: "photoshop" },
  { id: "excel", running: true },
  { id: "paint" },
  { id: "explorer", running: true },
  { id: "solidworks", running: true, active: true },
];

function Taskbar() {
  return (
    <footer className="relative flex h-[39px] shrink-0 items-center overflow-hidden border-t border-[#16324e] bg-[linear-gradient(to_right,#164f83_0%,#1f6ba3_5%,#2f8fc8_10%,#3a9cd0_25%,#3097cf_35%,#2484c6_50%,#1e63b0_72%,#1c57a0_82%,#12335e_87%,#143862_100%)]">
      <svg viewBox="0 0 80 40" width="80" height="40" className="absolute left-[72%] top-0 blur-[1px]" aria-hidden="true">
        <path d="M4 -2Q24 14 40 42" fill="none" stroke="#a8d6fc" strokeWidth="12" opacity=".9" />
      </svg>
      <button type="button" aria-label="Пуск" className="ml-2 shrink-0">
        <svg viewBox="0 0 38 38" width="38" height="38">
          <circle cx="19" cy="19" r="18" fill="#1a5c96" stroke="#79b6dc" />
          <ellipse cx="19" cy="30" rx="12" ry="6" fill="#48c4f0" opacity=".7" />
          <path d="M9 12q5-4 9-1l-2 8q-4-3-9 0z" fill="#ee5a2a" />
          <path d="M20 12q5 3 10-1l-2 8q-5 3-10 1z" fill="#8cc63f" />
          <path d="M7 21q5-3 9 0l-2 8q-4-3-9 0z" fill="#3f9be8" />
          <path d="M18 22q5 3 10 0l-2 8q-5 3-10 0z" fill="#fcc92c" />
          <path d="M3 14Q8 2 19 2t16 12q-16-6-32 0z" fill="#fff" opacity=".3" />
        </svg>
      </button>
      <nav className="ml-3.5 flex items-center gap-[3px]">
        {TASKS.map((task) => (
          <button
            key={task.id}
            type="button"
            aria-label={task.id}
            className={clsx(
              "relative flex h-[38px] items-center justify-center rounded-sm border",
              task.active
                ? "w-[54px] border-[#1f4f70] bg-gradient-to-b from-[#d5e8f5] to-[#a6d4ec] shadow-[inset_0_0_0_1px_#eef8fd,4px_0_0_#7fc0e0,5px_0_0_#1f4f70]"
                : task.running
                  ? "w-[59px] border-[#245a80] bg-gradient-to-b from-[#8fc4e4] to-[#5fb0dc] shadow-[inset_0_0_0_1px_#b9dff3]"
                  : "w-[59px] border-transparent"
            )}
          >
            <svg viewBox="0 0 32 32" width="32" height="32" aria-hidden="true">{APP_LOGOS[task.id]}</svg>
          </button>
        ))}
      </nav>
      <div className="relative ml-auto flex items-center font-['Noto_Sans',sans-serif] text-[11px] text-white">
        <span className="pb-1.5 pr-3.5 text-[12px]">RU</span>
        <div className="flex items-center gap-2">
          <svg viewBox="0 0 16 16" width="16" height="16"><path d="M1 3l6-2 6 2v6l-6 3-6-3z" fill="#c81c1c" stroke="#eee" strokeWidth=".6" /><path d="M3 4h3L3.500 6 6 8H3M8 4l1 4 1.500-3L11 8l1-4" fill="none" stroke="#fff" strokeWidth=".9" /><path d="M5 10l3 4 7-8" fill="none" stroke="#35d03a" strokeWidth="2.400" /></svg>
          <svg viewBox="0 0 16 16" width="16" height="16"><path d="M2 6h3l6-5v14l-6-5H2z" fill="#e07a5c" stroke="#f2c8b8" strokeWidth=".6" /><path d="M13 4q2 4 0 8" fill="none" stroke="#a0402c" /></svg>
          <svg viewBox="0 0 16 16" width="16" height="16"><path d="M1 1h14v14H1z" fill="#d01818" /><path d="M3 2v12M13 2L5 8l7 6" fill="none" stroke="#fff" strokeWidth="2.200" /><path d="M10 11h6v4h-6z" fill="#333" stroke="#ddd" strokeWidth=".7" /></svg>
          <svg viewBox="0 0 16 16" width="16" height="16"><path d="M3 1v15" stroke="#fff" strokeWidth="1.500" /><path d="M4 2h6v2h5l-2 2.500 2 3H9V8H4z" fill="#fff" /></svg>
          <svg viewBox="0 0 16 16" width="16" height="16"><path d="M5 5h10v7H5zM7 15h6M10 12v3M1 1v3h4V1M3 4v9h2" fill="none" stroke="#fff" strokeWidth="1.300" /></svg>
          <svg viewBox="0 0 16 16" width="16" height="16"><path d="M1 6h2l4-4v12L3 10H1z" fill="#fff" /><path d="M9 5q2 3 0 6M11 3.500q3 4.500 0 9M13 2q4 6 0 12" fill="none" stroke="#fff" /></svg>
        </div>
        <time className="w-[84px] text-center leading-[18px]">
          <span className="block">17:47</span>
          <span className="block">13.11.2015</span>
        </time>
        <button type="button" aria-label="Свернуть все окна" className="h-10 w-[14px] border border-[#5b82a8] bg-gradient-to-b from-[#4c7096] to-[#17395f]" />
      </div>
    </footer>
  );
}

export default function App() {
  return (
    <div className="flex h-screen flex-col overflow-hidden bg-[#e1e4ec] font-['DejaVu_Sans_Condensed','DejaVu_Sans',sans-serif]">
      <TitleBar />
      <ViewToolbar />
      <Ribbon />
      <div className="flex min-h-0 flex-1">
        <div className="flex w-[196px] shrink-0 flex-col">
          <CommandTabs />
          <FeaturePanel />
        </div>
        <Viewport />
      </div>
      <ModelTabs />
      <StatusBar />
      <Taskbar />
    </div>
  );
}
